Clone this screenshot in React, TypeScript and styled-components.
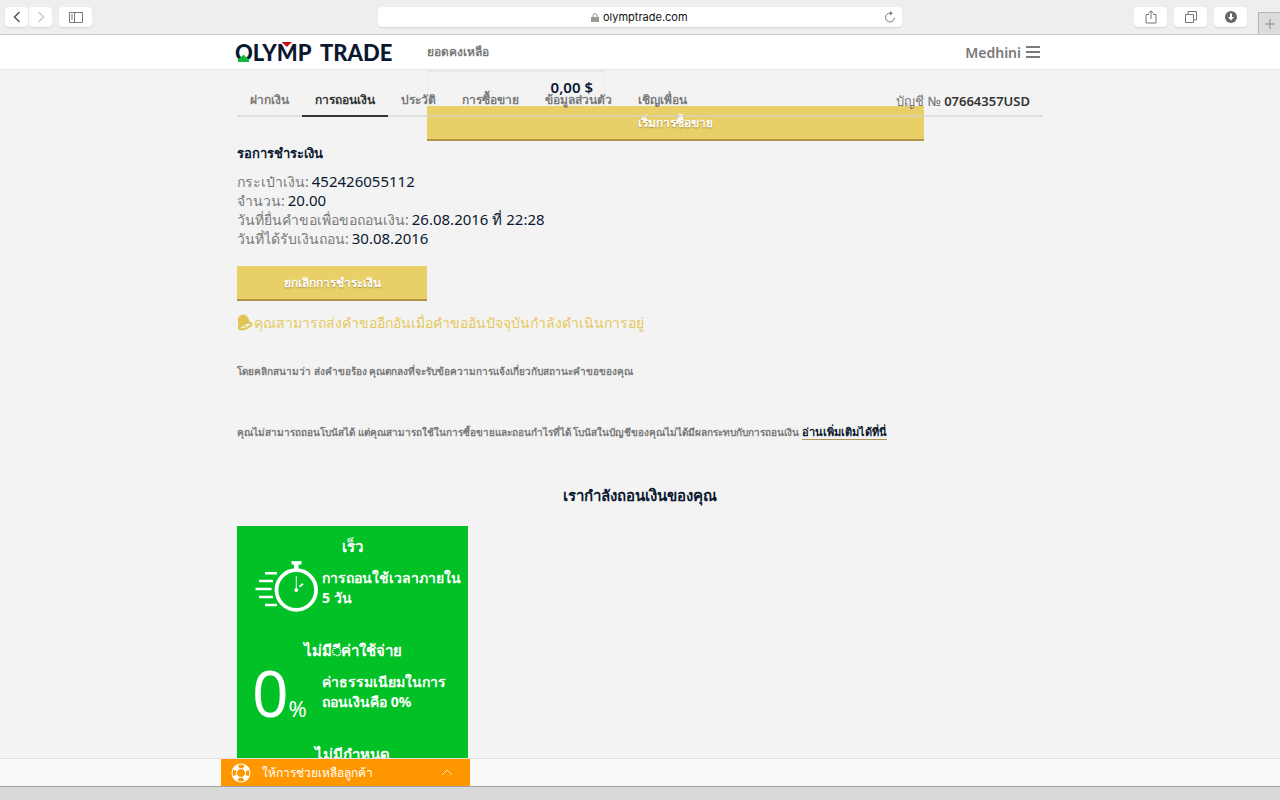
import React from 'react';
import styled, { createGlobalStyle } from 'styled-components';

const GlobalStyle = createGlobalStyle`
  *, *::before, *::after { box-sizing: border-box; }
  body {
    margin: 0;
    font-family: "Noto Sans", "Open Sans", sans-serif;
    color: #7a7a7a;
    background: #f3f3f3;
  }
  button, input { font-family: inherit; }
  h1, h2, h3, p, dl, dd, dt { margin: 0; }
`;

const NAVY = '#0b1930';

const Window = styled.div`
  height: 100vh;
  display: flex;
  flex-direction: column;
  overflow: hidden;
`;

/* ---------- browser chrome ---------- */

const Chrome = styled.header`
  height: 35px;
  flex: none;
  display: grid;
  grid-template-columns: 1fr 41% 1fr;
  align-items: start;
  background: #eeeeee;
  border-bottom: 1px solid #cbcbcb;
`;

const ChromeSide = styled.div<{ $end?: boolean }>`
  display: flex;
  padding: ${p => (p.$end ? '7px 0 0' : '7px 0 0 5px')};
  gap: ${p => (p.$end ? '7px' : '1px')};
  justify-content: ${p => (p.$end ? 'flex-end' : 'flex-start')};
`;

const ChromeButton = styled.button<{ $wide?: boolean; $apart?: boolean }>`
  width: ${p => (p.$wide ? '33px' : '23px')};
  height: 20px;
  padding: 0;
  border: 0;
  border-radius: 4px;
  margin-left: ${p => (p.$apart ? '6px' : '0')};
  background: #fff;
  box-shadow: 0 1px 1px #d6d6d6;
  display: flex;
  align-items: center;
  justify-content: center;
`;

const Address = styled.div`
  height: 20px;
  margin-top: 7px;
  padding: 0 6px 0 18px;
  display: flex;
  align-items: center;
  background: #fff;
  border-radius: 4px;
  box-shadow: 0 1px 1px #d6d6d6;
`;

const AddressText = styled.div`
  flex: 1;
  display: flex;
  align-items: center;
  justify-content: center;
  gap: 4px;
`;

const AddressInput = styled.input`
  width: 86px;
  padding: 0;
  border: 0;
  outline: 0;
  background: none;
  font: 11px/16px Inter, sans-serif;
  color: #111;
`;

const PlainButton = styled.button`
  padding: 0;
  border: 0;
  background: none;
  display: flex;
`;

const NewTab = styled.button`
  width: 22px;
  height: 22px;
  margin: 5px 0 0 4px;
  padding: 0;
  border: solid #b5b5b5;
  border-width: 1px 0 0 1px;
  background: #dcdcdc;
  display: flex;
  align-items: center;
  justify-content: center;
`;

/* ---------- site header ---------- */

const SiteHeader = styled.header`
  flex: none;
  background: #fff;
  border-bottom: 1px solid #e6e6e6;
`;

const Container = styled.div`
  width: 100%;
  max-width: 806px;
  margin: 0 auto;
`;

const HeaderRow = styled(Container)`
  height: 34px;
  display: flex;
  align-items: center;
`;

const Logo = styled.a`
  width: 190px;
  flex: none;
  display: block;
  text-decoration: none;
`;

const LogoArt = styled.svg`
  display: block;
  margin-left: -3px;
  overflow: visible;
`;

const Balance = styled.div`
  position: relative;
  flex: 1;
  font-size: 12px;
  line-height: 34px;
  font-weight: 700;
`;

const BalanceOverlay = styled.div`
  position: absolute;
  top: 35px;
  left: 0;
  width: 497px;
  z-index: 1;
`;

const BalanceBox = styled.div`
  width: 178px;
  height: 36px;
  padding: 0 11px;
  border: 1px solid #e9e9e9;
  border-top-width: 2px;
  border-bottom: 0;
  text-align: right;
  font-size: 15px;
  line-height: 30px;
  font-weight: 600;
  color: ${NAVY};
`;

const GoldButton = styled.button<{ $narrow?: boolean }>`
  width: ${p => (p.$narrow ? '190px' : '100%')};
  height: 35px;
  padding: 0;
  display: block;
  border: 0;
  border-bottom: 2px solid #b39645;
  background: #e9cf68;
  color: #fff;
  font-size: 12px;
  line-height: 32px;
  font-weight: 700;
  text-shadow: 0 1px 1px #a88c3c;
`;

const UserButton = styled.button`
  padding: 0;
  margin-right: 3px;
  border: 0;
  background: none;
  display: flex;
  align-items: center;
  gap: 5px;
  font-size: 14px;
  font-weight: 600;
  color: #7a7a7a;
`;

/* ---------- page ---------- */

const Main = styled.main`
  flex: 1;
  min-height: 0;
  overflow: hidden;
`;

const Nav = styled.nav`
  position: relative;
  z-index: 2;
  height: 47px;
  display: flex;
  align-items: flex-end;
  box-shadow: inset 0 -2px 0 rgba(210, 210, 210, 0.6);
`;

const Tab = styled.a<{ $active?: boolean }>`
  height: 32px;
  padding: 0 13px;
  border-bottom: 2px solid ${p => (p.$active ? '#333' : 'transparent')};
  color: ${p => (p.$active ? '#333' : '#7a7a7a')};
  font-size: 12px;
  line-height: 30px;
  font-weight: 700;
  text-decoration: none;
  white-space: nowrap;
`;

const Account = styled.div`
  margin-left: auto;
  padding-right: 13px;
  font-size: 13px;
  line-height: 32px;
  font-weight: 500;
  b { color: #333; font-weight: 600; }
`;

const PendingTitle = styled.h2`
  margin-top: 26px;
  font-size: 13px;
  line-height: 20px;
  color: ${NAVY};
`;

const Details = styled.dl`
  margin-top: 9px;
  line-height: 19px;
`;

const Detail = styled.div`
  display: flex;
  align-items: baseline;
  gap: 3px;
  dt { font-size: 14px; }
  dd { font-size: 15px; color: ${NAVY}; }
`;

const CancelRow = styled.div`
  margin-top: 18px;
`;

const Notice = styled.p`
  margin-top: 11px;
  display: flex;
  align-items: center;
  color: #e6c95c;
  font-size: 14px;
  line-height: 22px;
`;

const Note = styled.p<{ $gap: number }>`
  margin-top: ${p => p.$gap}px;
  font-size: 10px;
  line-height: 16px;
  font-weight: 600;
  a {
    color: ${NAVY};
    font-size: 11px;
    font-weight: 700;
    text-decoration: none;
    border-bottom: 1px solid #b3925a;
  }
`;

const SectionTitle = styled.h2`
  margin-top: 43px;
  text-align: center;
  font-size: 15px;
  line-height: 24px;
  color: ${NAVY};
`;

const Benefits = styled.section`
  width: 231px;
  margin-top: 19px;
  padding-top: 10px;
  background: #02c126;
  color: #fff;
`;

const Benefit = styled.article`
  height: 104px;
`;

const BenefitTitle = styled.h3`
  font-size: 15px;
  line-height: 20px;
  text-align: center;
`;

const BenefitBody = styled.div`
  display: flex;
  padding-left: 15px;
`;

const BenefitArt = styled.div`
  width: 70px;
  flex: none;
  padding-top: 5px;
`;

const BenefitText = styled.p`
  padding-top: 12px;
  font-size: 14px;
  line-height: 20px;
  font-weight: 700;
`;

const Zero = styled.div`
  display: flex;
  align-items: baseline;
  font-size: 64px;
  line-height: 56px;
  font-weight: 400;
  span { font-size: 22px; }
`;

/* ---------- bottom ---------- */

const HelpBar = styled.footer`
  height: 28px;
  flex: none;
  background: #fafafa;
  border-top: 1px solid #e2e2e2;
`;

const HelpRow = styled.div`
  width: 100%;
  max-width: 838px;
  margin: 0 auto;
`;

const HelpButton = styled.button`
  width: 249px;
  height: 27px;
  padding: 0 17px 0 10px;
  border: 0;
  background: #ff9800;
  color: #fff;
  display: flex;
  align-items: center;
  gap: 11px;
  font-size: 12px;
  span { flex: 1; text-align: left; }
`;

const WindowEdge = styled.div`
  height: 14px;
  flex: none;
  background: #d9d9d9;
  border-top: 1px solid #a0a0a0;
`;

const Stopwatch = () => (
  <svg width="67" height="52" viewBox="-3 0 67 52" fill="none" stroke="#fff" aria-hidden="true">
    <circle cx="41.300" cy="29" r="19.800" strokeWidth="3.800" />
    <path d="M36.500 1.800h10" strokeWidth="3.400" />
    <path d="M41.300 3v5" strokeWidth="4.500" />
    <path d="M41.300 15v14" strokeWidth="1" />
    <circle cx="41.300" cy="29" r="1.500" fill="#fff" />
    <path d="M44.500 25.800l3.500-3" strokeWidth="1.800" />
    <path d="M10 12.200h12M4 20h14M0.500 28h16M4 36h14M10 44h12" strokeWidth="2.600" />
  </svg>
);

const App = () => (
  <Window>
    <GlobalStyle />
    <Chrome>
      <ChromeSide>
        <ChromeButton aria-label="Back">
          <svg width="8" height="12" viewBox="0 0 8 12" fill="none" stroke="#555" strokeWidth="1.500"><path d="M6.500 1L1.500 6l5 5" /></svg>
        </ChromeButton>
        <ChromeButton aria-label="Forward">
          <svg width="8" height="12" viewBox="0 0 8 12" fill="none" stroke="#c4c4c4" strokeWidth="1.300"><path d="M1.500 1l5 5-5 5" /></svg>
        </ChromeButton>
        <ChromeButton $wide $apart aria-label="Sidebar">
          <svg width="14" height="11" viewBox="0 0 14 11" fill="none" stroke="#777"><path d="M.5.5h13v10H.5zM5.500.5v10M2 3h2M2 5h2M2 7h2" /></svg>
        </ChromeButton>
      </ChromeSide>
      <Address>
        <AddressText>
          <svg width="8" height="9" viewBox="0 0 8 9" aria-hidden="true"><path d="M0 4h8v5H0z" fill="#9a9a9a" /><path d="M2 4V2.500a2 2 0 014 0V4" fill="none" stroke="#9a9a9a" /></svg>
          <AddressInput aria-label="Address" defaultValue="olymptrade.com" />
        </AddressText>
        <PlainButton aria-label="Reload">
          <svg width="12" height="12" viewBox="0 0 12 12" fill="none" stroke="#777"><path d="M6.500 2.200A4.400 4.400 0 1010.400 6.500" /><path d="M6 0l2.800 2.200L6 4.400z" fill="#777" stroke="none" /></svg>
        </PlainButton>
      </Address>
      <ChromeSide $end>
        <ChromeButton $wide aria-label="Share">
          <svg width="12" height="14" viewBox="0 0 12 14" fill="none" stroke="#777"><path d="M4 4.500H1v8.500h10V4.500H8M6 9V1M3.500 3.200L6 .8l2.500 2.400" /></svg>
        </ChromeButton>
        <ChromeButton $wide aria-label="Tabs">
          <svg width="12" height="12" viewBox="0 0 12 12" fill="none" stroke="#777"><path d="M.5 3.500h8v8h-8zM3 3V.5h8.500V9H9" /></svg>
        </ChromeButton>
        <ChromeButton $wide aria-label="Downloads">
          <svg width="12" height="12" viewBox="0 0 12 12"><circle cx="6" cy="6" r="6" fill="#666" /><path d="M5 2.500h2v3.500h2L6 9.500 3 6h2z" fill="#fff" /></svg>
        </ChromeButton>
        <NewTab aria-label="New tab">
          <svg width="10" height="10" viewBox="0 0 10 10" stroke="#8a8a8a"><path d="M5 0v10M0 5h10" /></svg>
        </NewTab>
      </ChromeSide>
    </Chrome>

    <SiteHeader>
      <HeaderRow>
        <Logo href="#" aria-label="Olymp Trade">
          <LogoArt width="164" height="24" viewBox="0 0 164 24">
            <text y="21" fontFamily="Lato, sans-serif" fontWeight="900" fontSize="22" fill={NAVY}>
              <tspan x="1">OLYMP</tspan>
              <tspan x="86">TRADE</tspan>
            </text>
            <path d="M4 22v-3l2-1 3.500-3.500L13 18l2 1v3z" fill="#12b83c" />
            <path d="M45 1h15l-7.500 8.500z" fill="#fff" />
            <path d="M47.500 2h10.500l-5.200 5z" fill="#c01212" />
          </LogoArt>
        </Logo>
        <Balance>
          ยอดคงเหลือ
          <BalanceOverlay>
            <BalanceBox>0,00 $</BalanceBox>
            <GoldButton>เริ่มการซื้อขาย</GoldButton>
          </BalanceOverlay>
        </Balance>
        <UserButton>
          Medhini
          <svg width="14" height="12" viewBox="0 0 14 12" stroke="#7a7a7a" strokeWidth="2"><path d="M0 1h14M0 6h14M0 11h14" /></svg>
        </UserButton>
      </HeaderRow>
    </SiteHeader>

    <Main>
      <Container>
        <Nav>
          <Tab href="#">ฝากเงิน</Tab>
          <Tab href="#" $active>การถอนเงิน</Tab>
          <Tab href="#">ประวัติ</Tab>
          <Tab href="#">การซื้อขาย</Tab>
          <Tab href="#">ข้อมูลส่วนตัว</Tab>
          <Tab href="#">เชิญเพื่อน</Tab>
          <Account>บัญชี № <b>07664357USD</b></Account>
        </Nav>

        <PendingTitle>รอการชำระเงิน</PendingTitle>
        <Details>
          <Detail><dt>กระเป๋าเงิน:</dt><dd>452426055112</dd></Detail>
          <Detail><dt>จำนวน:</dt><dd>20.00</dd></Detail>
          <Detail><dt>วันที่ยื่นคำขอเพื่อขอถอนเงิน:</dt><dd>26.08.2016 ที่ 22:28</dd></Detail>
          <Detail><dt>วันที่ได้รับเงินถอน:</dt><dd>30.08.2016</dd></Detail>
        </Details>
        <CancelRow><GoldButton $narrow>ยกเลิกการชำระเงิน</GoldButton></CancelRow>
        <Notice>
          <svg width="17" height="18" viewBox="0 0 17 18" aria-hidden="true">
            <path d="M1.500 11C0 6 1 2 4 1c4-1.500 7.500 1.500 8.500 6.500L15.500 9c1 4-7 7.500-12.500 7.500C1 16 .5 13 1.500 11z" fill="#e2c454" />
            <path d="M4 14.300c0-2 5-5 9.500-4.800-.5 2.500-5.500 5-9.500 4.800z" fill="#f3f3f3" />
            <path d="M6 13.600c0-1.500 2-2.500 3.500-2.300.3 1.200-1.500 2.300-3.500 2.300z" fill="#e2c454" />
          </svg>
          คุณสามารถส่งคำขออีกอันเมื่อคำขออันปัจจุบันกำลังดำเนินการอยู่
        </Notice>
        <Note $gap={29}>โดยคลิกสนามว่า ส่งคำขอร้อง คุณตกลงที่จะรับข้อความการแจ้งเกี่ยวกับสถานะคำขอของคุณ</Note>
        <Note $gap={45}>
          คุณไม่สามารถถอนโบนัสได้ แต่คุณสามารถใช้ในการซื้อขายและถอนกำไรที่ได้ โบนัสในบัญชีของคุณไม่ได้มีผลกระทบกับการถอนเงิน <a href="#">อ่านเพิ่มเติมได้ที่นี่</a>
        </Note>

        <SectionTitle>เรากำลังถอนเงินของคุณ</SectionTitle>
        <Benefits>
          <Benefit>
            <BenefitTitle>เร็ว</BenefitTitle>
            <BenefitBody>
              <BenefitArt><Stopwatch /></BenefitArt>
              <BenefitText>การถอนใช้เวลาภายใน 5 วัน</BenefitText>
            </BenefitBody>
          </Benefit>
          <Benefit>
            <BenefitTitle>ไม่มี◌ีค่าใช้จ่าย</BenefitTitle>
            <BenefitBody>
              <BenefitArt><Zero>0<span>%</span></Zero></BenefitArt>
              <BenefitText>ค่าธรรมเนียมในการ<br />ถอนเงินคือ 0%</BenefitText>
            </BenefitBody>
          </Benefit>
          <Benefit>
            <BenefitTitle>ไม่มีกำหนด</BenefitTitle>
          </Benefit>
        </Benefits>
      </Container>
    </Main>

    <HelpBar>
      <HelpRow>
        <HelpButton>
          <svg width="20" height="20" viewBox="0 0 20 20" fill="none" stroke="#fff" aria-hidden="true">
            <circle cx="10" cy="10" r="9" />
            <circle cx="10" cy="10" r="4.500" />
            <circle cx="10" cy="10" r="6.800" strokeWidth="5" strokeDasharray="5.340 5.340" strokeDashoffset="-2.670" />
          </svg>
          <span>ให้การช่วยเหลือลูกค้า</span>
          <svg width="12" height="7" viewBox="0 0 12 7" fill="none" stroke="#ffe0b0"><path d="M1 6l5-5 5 5" /></svg>
        </HelpButton>
      </HelpRow>
    </HelpBar>
    <WindowEdge />
  </Window>
);

export default App;
